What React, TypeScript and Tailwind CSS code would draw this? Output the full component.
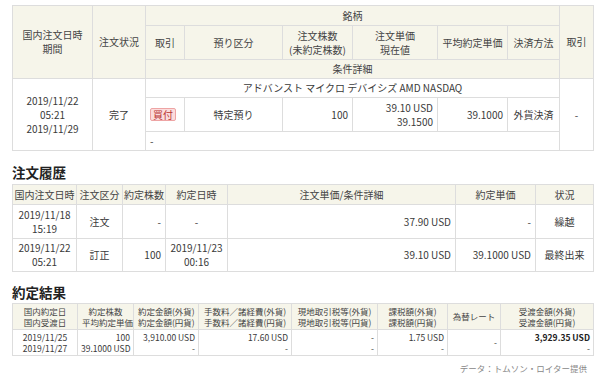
import React from "react";

const th = "border border-[#dddddd] bg-[#f6f5ea] font-normal text-[#444] px-1";
const td = "border border-[#dddddd] px-1 text-[#3a3a3a]";
const td3 = "border border-[#dddddd] px-[3px] text-[#3a3a3a] whitespace-nowrap";

function OrderTable() {
    return (
        <table className="w-[581px] table-fixed border-collapse text-[10px] leading-[14px]">
            <colgroup>
                <col className="w-[80px]" />
                <col className="w-[53px]" />
                <col className="w-[39px]" />
                <col className="w-[98px]" />
                <col className="w-[70px]" />
                <col className="w-[85px]" />
                <col className="w-[70px]" />
                <col className="w-[52px]" />
                <col className="w-[34px]" />
            </colgroup>
            <thead>
                <tr className="h-[20px]">
                    <th rowSpan={3} className={th}>
                        国内注文日時
                        <br />
                        期間
                    </th>
                    <th rowSpan={3} className={th}>注文状況</th>
                    <th colSpan={6} className={th}>銘柄</th>
                    <th rowSpan={3} className={th}>取引</th>
                </tr>
                <tr className="h-[34px]">
                    <th className={th}>取引</th>
                    <th className={th}>預り区分</th>
                    <th className={th}>
                        注文株数
                        <br />
                        (未約定株数)
                    </th>
                    <th className={th}>
                        注文単価
                        <br />
                        現在値
                    </th>
                    <th className={th}>平均約定単価</th>
                    <th className={th}>決済方法</th>
                </tr>
                <tr className="h-[19px]">
                    <th colSpan={6} className={th}>条件詳細</th>
                </tr>
            </thead>
            <tbody>
                <tr className="h-[19px]">
                    <td rowSpan={3} className={`${td} text-center`}>
                        2019/11/22
                        <br />
                        05:21
                        <br />
                        2019/11/29
                    </td>
                    <td rowSpan={3} className={`${td} text-center`}>完了</td>
                    <td colSpan={6} className={`${td} text-center`}>
                        アドバンスト マイクロ デバイシズ AMD NASDAQ
                    </td>
                    <td rowSpan={3} className={`${td} text-center`}>-</td>
                </tr>
                <tr className="h-[34px]">
                    <td className={td}>
                        <span className="inline-block rounded-[2px] border border-[#eea4a4] bg-[#fbdcdc] px-[2px] text-[10px] leading-[11px] text-[#b83232]">
                            買付
                        </span>
                    </td>
                    <td className={`${td} text-center`}>特定預り</td>
                    <td className={`${td} text-right`}>100</td>
                    <td className={`${td} text-right`}>
                        39.10 USD
                        <br />
                        39.1500
                    </td>
                    <td className={`${td} text-right`}>39.1000</td>
                    <td className={`${td} text-center`}>外貨決済</td>
                </tr>
                <tr className="h-[19px]">
                    <td colSpan={6} className={td}>-</td>
                </tr>
            </tbody>
        </table>
    );
}

function HistoryTable() {
    return (
        <table className="w-[581px] table-fixed border-collapse text-[10px] leading-[14px]">
            <colgroup>
                <col className="w-[64px]" />
                <col className="w-[46px]" />
                <col className="w-[43px]" />
                <col className="w-[62px]" />
                <col className="w-[228px]" />
                <col className="w-[80px]" />
                <col className="w-[58px]" />
            </colgroup>
            <thead>
                <tr className="h-[20px]">
                    <th className={`${th} whitespace-nowrap !px-0`}>国内注文日時</th>
                    <th className={`${th} whitespace-nowrap !px-0`}>注文区分</th>
                    <th className={`${th} whitespace-nowrap !px-0`}>約定株数</th>
                    <th className={th}>約定日時</th>
                    <th className={th}>注文単価/条件詳細</th>
                    <th className={th}>約定単価</th>
                    <th className={th}>状況</th>
                </tr>
            </thead>
            <tbody>
                <tr className="h-[34px]">
                    <td className={`${td} text-center`}>
                        2019/11/18
                        <br />
                        15:19
                    </td>
                    <td className={`${td} text-center`}>注文</td>
                    <td className={`${td} text-right`}>-</td>
                    <td className={`${td} text-center`}>-</td>
                    <td className={`${td} text-right`}>37.90 USD</td>
                    <td className={`${td} text-right`}>-</td>
                    <td className={`${td} text-center`}>繰越</td>
                </tr>
                <tr className="h-[33px]">
                    <td className={`${td} text-center`}>
                        2019/11/22
                        <br />
                        05:21
                    </td>
                    <td className={`${td} text-center`}>訂正</td>
                    <td className={`${td} text-right`}>100</td>
                    <td className={`${td} text-center`}>
                        2019/11/23
                        <br />
                        00:16
                    </td>
                    <td className={`${td} text-right`}>39.10 USD</td>
                    <td className={`${td} text-right`}>39.1000 USD</td>
                    <td className={`${td} text-center`}>最終出来</td>
                </tr>
            </tbody>
        </table>
    );
}

function ResultTable() {
    const heads: [string, string][] = [
        ["国内約定日", "国内受渡日"],
        ["約定株数", "平均約定単価"],
        ["約定金額(外貨)", "約定金額(円貨)"],
        ["手数料／諸経費(外貨)", "手数料／諸経費(円貨)"],
        ["現地取引税等(外貨)", "現地取引税等(円貨)"],
        ["課税額(外貨)", "課税額(円貨)"],
    ];
    return (
        <table className="w-[581px] table-fixed border-collapse text-[8.5px] leading-[11px]">
            <colgroup>
                <col className="w-[65px]" />
                <col className="w-[56px]" />
                <col className="w-[65px]" />
                <col className="w-[93px]" />
                <col className="w-[86px]" />
                <col className="w-[70px]" />
                <col className="w-[53px]" />
                <col className="w-[93px]" />
            </colgroup>
            <thead>
                <tr className="h-[26px]">
                    {heads.map(([a, b]) => (
                        <th key={a} className={`${th} whitespace-nowrap`}>
                            {a}
                            <br />
                            {b}
                        </th>
                    ))}
                    <th className={th}>為替レート</th>
                    <th className={th}>
                        受渡金額(外貨)
                        <br />
                        受渡金額(円貨)
                    </th>
                </tr>
            </thead>
            <tbody>
                <tr className="h-[26px]">
                    <td className={`${td3} text-center`}>
                        2019/11/25
                        <br />
                        2019/11/27
                    </td>
                    <td className={`${td3} text-right`}>
                        100
                        <br />
                        39.1000 USD
                    </td>
                    <td className={`${td3} text-right align-top pt-[2px]`}>
                        3,910.00 USD
                        <br />
                        -
                    </td>
                    <td className={`${td3} text-right`}>
                        17.60 USD
                        <br />
                        -
                    </td>
                    <td className={`${td3} text-right`}>
                        -
                        <br />
                        -
                    </td>
                    <td className={`${td3} text-right`}>
                        1.75 USD
                        <br />
                        -
                    </td>
                    <td className={`${td3} text-right`}>-</td>
                    <td className={`${td3} text-right`}>
                        <span className="font-bold text-[#222]">3,929.35 USD</span>
                        <br />
                        -
                    </td>
                </tr>
            </tbody>
        </table>
    );
}

export default function App() {
    return (
        <div
            className="w-[600px] h-[383px] overflow-hidden bg-white pl-[12px] pt-[5px]"
            style={{ fontFamily: '"Noto Sans CJK JP", "Noto Sans", sans-serif' }}
        >
            <OrderTable />
            <h2 className="mt-[12px] mb-[3px] text-[13.5px] font-bold leading-[18px] text-[#222]">注文履歴</h2>
            <HistoryTable />
            <h2 className="mt-[11px] mb-[2px] text-[13.5px] font-bold leading-[18px] text-[#222]">約定結果</h2>
            <ResultTable />
            <div className="w-[575px] pt-[6px] text-right text-[8.5px] leading-[12px] text-[#888]">
                データ：トムソン・ロイター提供
            </div>
        </div>
    );
}
